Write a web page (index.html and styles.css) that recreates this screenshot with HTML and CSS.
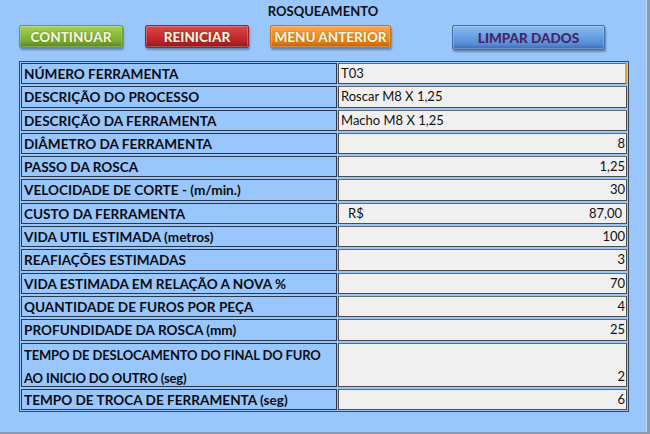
FILE: index.html
```html
<!DOCTYPE html>
<html lang="pt">
<head>
<meta charset="utf-8">
<link rel="stylesheet" href="styles.css">
</head>
<body>
<div class="page">
  <h1 class="title">ROSQUEAMENTO</h1>
  <div class="buttons">
    <div class="btn btn-green">CONTINUAR</div>
    <div class="btn btn-red">REINICIAR</div>
    <div class="btn btn-orange">MENU ANTERIOR</div>
    <div class="btn btn-blue">LIMPAR DADOS</div>
  </div>
  <div class="sheet">
    <div class="lbl">NÚMERO FERRAMENTA</div><div class="val left sel">T03</div>
    <div class="lbl">DESCRIÇÃO DO PROCESSO</div><div class="val left">Roscar M8 X 1,25</div>
    <div class="lbl">DESCRIÇÃO DA FERRAMENTA</div><div class="val left">Macho M8 X 1,25</div>
    <div class="lbl">DIÂMETRO DA FERRAMENTA</div><div class="val">8</div>
    <div class="lbl">PASSO DA ROSCA</div><div class="val">1,25</div>
    <div class="lbl">VELOCIDADE DE CORTE - (m/min.)</div><div class="val">30</div>
    <div class="lbl">CUSTO DA FERRAMENTA</div><div class="val money"><span>R$</span><span>87,00</span></div>
    <div class="lbl">VIDA UTIL ESTIMADA (metros)</div><div class="val">100</div>
    <div class="lbl">REAFIAÇÕES ESTIMADAS</div><div class="val">3</div>
    <div class="lbl">VIDA ESTIMADA EM RELAÇÃO A NOVA %</div><div class="val">70</div>
    <div class="lbl">QUANTIDADE DE FUROS POR PEÇA</div><div class="val">4</div>
    <div class="lbl">PROFUNDIDADE DA ROSCA (mm)</div><div class="val">25</div>
    <div class="lbl tall">TEMPO DE DESLOCAMENTO DO FINAL DO FURO<br>AO INICIO DO OUTRO (seg)</div><div class="val tall">2</div>
    <div class="lbl">TEMPO DE TROCA DE FERRAMENTA (seg)</div><div class="val">6</div>
  </div>
</div>
</body>
</html>
```
FILE: styles.css
```css
html, body {
  margin: 0;
  padding: 0;
}
body {
  width: 650px;
  height: 434px;
  overflow: hidden;
  background: #8a9bb0;
  font-family: Lato, "Open Sans", sans-serif;
}
.page {
  box-sizing: border-box;
  width: 647px;
  height: 432px;
  background: #99c7fb;
  border-right: 1px solid #b8d6f5;
  padding-top: 3px;
}
.title {
  margin: 0;
  text-align: center;
  font-size: 13px;
  font-weight: 700;
  color: #101010;
  line-height: 16px;
}
.buttons {
  display: flex;
  align-items: flex-start;
  padding-left: 19px;
  margin-top: 6px;
  height: 36px;
}
.btn {
  box-sizing: border-box;
  height: 23px;
  display: flex;
  align-items: center;
  justify-content: center;
  font-size: 13.5px;
  font-weight: 900;
  color: #f4f4d8;
  text-shadow: 0 0 2px rgba(0,0,0,0.35);
  border-radius: 2px;
  box-shadow: 1px 2px 2px rgba(40,60,90,0.45), inset 0 0 0 1px rgba(255,255,255,0.25), inset 0 -3px 3px rgba(0,0,0,0.15);
}
.btn-green {
  width: 104px;
  background: linear-gradient(#a6d25a, #7fb334 60%, #6b9d28);
  border: 1px solid #6f9a30;
}
.btn-red {
  width: 104px;
  margin-left: 22px;
  background: linear-gradient(#d94a4c, #c3272b 60%, #a71e22);
  border: 1px solid #9a2427;
}
.btn-orange {
  width: 121px;
  margin-left: 21px;
  background: linear-gradient(#fba44a, #f38a1c 60%, #dd7410);
  border: 1px solid #c9701c;
}
.btn-blue {
  width: 153px;
  height: 25px;
  margin-left: 61px;
  color: #4a2363;
  text-shadow: none;
  background: linear-gradient(#8bbcf0, #5f98e0 60%, #4b82cf);
  border: 1px solid #3f6ea8;
}
.sheet {
  margin-left: 19px;
  width: 610px;
  box-sizing: border-box;
  display: grid;
  grid-template-columns: 316px 1fr;
  grid-auto-rows: 21.3px;
  gap: 2px 1px;
  padding: 1px;
  border: 1px solid #3a4656;
  background: #99c7fb;
}
.lbl {
  border: 1px solid #2c3848;
  font-size: 13.6px;
  font-weight: 700;
  color: #0c0c14;
  line-height: 20px;
  padding-left: 2px;
  white-space: nowrap;
  overflow: hidden;
}
.val {
  box-sizing: border-box;
  background: #f0f0f0;
  border: 1px solid #4c4c4c;
  border-top-color: #6a6a6a;
  font-size: 13px;
  color: #111;
  line-height: 19px;
  text-align: right;
  padding-right: 1px;
  white-space: nowrap;
}
.val.left {
  text-align: left;
  padding-left: 2px;
}
.val.sel {
  border-right: 2px solid #d8a050;
}
.val.money {
  display: flex;
  justify-content: space-between;
  padding-left: 9px;
  padding-right: 4px;
}
.lbl.tall {
  grid-row: span 2;
  line-height: 23px;
  font-size: 13px;
  letter-spacing: -0.15px;
}
.val.tall {
  grid-row: span 2;
  display: flex;
  align-items: flex-end;
  justify-content: flex-end;
}
```
